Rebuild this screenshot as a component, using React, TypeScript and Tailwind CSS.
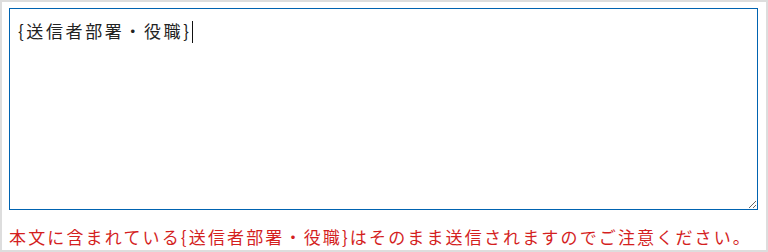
import { useEffect, useRef } from 'react';

export default function App() {
    const ref = useRef<HTMLTextAreaElement>(null);
    const value = '{送信者部署・役職}';

    useEffect(() => {
        const el = ref.current;
        if (el) {
            el.focus();
            el.setSelectionRange(value.length, value.length);
        }
    }, []);

    return (
        <div
            className="w-[768px] h-[252px] border-2 border-[#dddddd] bg-white pl-[7px] pt-[6px]"
            style={{ fontFamily: '"Noto Sans CJK JP", "Noto Sans", sans-serif' }}
        >
            <div className="relative w-[749px] h-[202px]">
                <textarea
                    ref={ref}
                    defaultValue={value}
                    className="block w-full h-full border border-[#0063b1] px-2 py-[10px] text-[17px] leading-[24px] tracking-[2.6px] text-[#222] outline-none resize"
                />
                {/* caret */}
                <span className="absolute left-[183px] top-[13px] h-[22px] w-px bg-[#111]" />
            </div>
            <p className="mt-[15px] text-[17px] leading-[24px] tracking-[2.15px] text-[#d41f1f] whitespace-nowrap">
                本文に含まれている{'{'}送信者部署・役職{'}'}はそのまま送信されますのでご注意ください。
            </p>
        </div>
    );
}
